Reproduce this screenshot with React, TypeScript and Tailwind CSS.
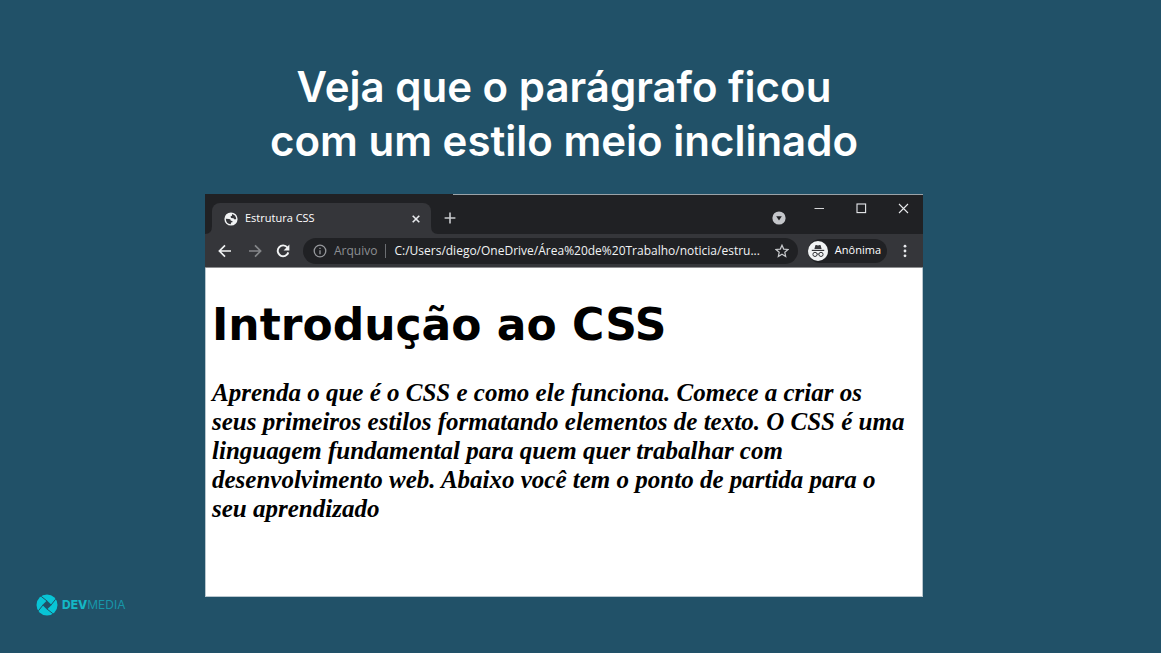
import React from "react";

function GlobeIcon() {
  return (
    <svg viewBox="0 0 14 14" className="size-3.5 shrink-0" aria-hidden="true">
      <circle cx="7" cy="7" r="6.6" fill="#f1f3f4" />
      <path
        d="M1.8 6.8 L5.2 7 Q6.8 7.2 6.8 8.8 L8.4 8.9 V10.2 L7 10.4 L6.8 12.2 Q2 12 1.8 6.8 Z M8 1.9 Q12 3 12.2 6.9 L10.8 7.5 L9.4 6.2 L7 6 L6.6 4.3 L8 3.8 Z"
        fill="#35363a"
      />
    </svg>
  );
}

function IncognitoIcon() {
  return (
    <svg viewBox="0 0 20 20" className="size-5 shrink-0" aria-hidden="true">
      <circle cx="10" cy="10" r="10" fill="#f1f3f4" />
      <path d="M6.4 8 L7.4 4.3 Q7.6 3.8 8.2 4 L10 4.5 L11.8 4 Q12.4 3.8 12.6 4.3 L13.6 8 Z" fill="#35363a" />
      <path d="M3.8 9.4 H16.2" stroke="#35363a" strokeWidth="1.2" />
      <g fill="none" stroke="#35363a" strokeWidth="1">
        <circle cx="7" cy="13.4" r="2.1" />
        <circle cx="13" cy="13.4" r="2.1" />
        <path d="M9.1 13.2 Q10 12.6 10.9 13.2" />
      </g>
    </svg>
  );
}

function TabStrip() {
  return (
    <div className="flex h-[39px] items-end bg-[#202124]">
      <svg viewBox="0 0 7 8" className="h-2 w-[7px] shrink-0" aria-hidden="true">
        <path d="M7 0 V8 H0 Q7 8 7 0 Z" fill="#35363a" />
      </svg>
      <div className="flex h-[31px] w-[219px] shrink-0 items-center rounded-t-lg bg-[#35363a] pr-2.5 pl-3 text-white">
        <GlobeIcon />
        <span className="ml-[7px] flex-1 text-[11px]">Estrutura CSS</span>
        <button type="button" aria-label="Fechar guia">
          <svg viewBox="0 0 10 10" className="size-2.5" aria-hidden="true">
            <path d="M1.7 1.7 L8.3 8.3 M8.3 1.7 L1.7 8.3" stroke="#e8eaed" strokeWidth="1.6" />
          </svg>
        </button>
      </div>
      <svg viewBox="0 0 7 8" className="h-2 w-[7px] shrink-0" aria-hidden="true">
        <path d="M0 0 V8 H7 Q0 8 0 0 Z" fill="#35363a" />
      </svg>
      <div className="flex h-full flex-1 items-start pl-1.5">
        <div className="flex flex-1 items-start">
          <button type="button" aria-label="Nova guia" className="mt-[17px]">
            <svg viewBox="0 0 12 12" className="size-3" aria-hidden="true">
              <path d="M6 0.6 V11.4 M0.6 6 H11.4" stroke="#c8cacd" strokeWidth="1.6" />
            </svg>
          </button>
        </div>
        <button type="button" aria-label="Pesquisar guias" className="mt-4 mr-7">
          <svg viewBox="0 0 14 14" className="size-3.5" aria-hidden="true">
            <circle cx="7" cy="7" r="6.6" fill="#c4c6ca" />
            <path d="M4.2 5.2 H9.8 L7 9.4 Z" fill="#202124" />
          </svg>
        </button>
        <div className="mt-2 mr-3.5 flex gap-[31px]">
          <button type="button" aria-label="Minimizar">
            <svg viewBox="0 0 11 11" className="size-[11px]" aria-hidden="true">
              <path d="M0.5 5.5 H10" stroke="#d5d6d8" />
            </svg>
          </button>
          <button type="button" aria-label="Maximizar">
            <svg viewBox="0 0 11 11" className="size-[11px]" aria-hidden="true">
              <rect x="1" y="1" width="8.6" height="8.6" fill="none" stroke="#e8eaed" strokeWidth="1.1" />
            </svg>
          </button>
          <button type="button" aria-label="Fechar">
            <svg viewBox="0 0 11 11" className="size-[11px]" aria-hidden="true">
              <path d="M1 1 L10 10 M10 1 L1 10" stroke="#e8eaed" strokeWidth="1.1" />
            </svg>
          </button>
        </div>
      </div>
    </div>
  );
}

function Toolbar() {
  return (
    <div className="flex h-[34px] items-center border-b border-[#8d8e90] bg-[#35363a] pr-4 pl-3 text-white">
      <button type="button" aria-label="Voltar">
        <svg viewBox="0 0 16 16" className="size-4" fill="none" stroke="#f1f3f4" strokeWidth="1.7" aria-hidden="true">
          <path d="M14 8 H2.8 M8 2.4 L2.4 8 L8 13.6" />
        </svg>
      </button>
      <button type="button" aria-label="Avançar" className="ml-3.5">
        <svg viewBox="0 0 16 16" className="size-4" fill="none" stroke="#85878a" strokeWidth="1.7" aria-hidden="true">
          <path d="M2 8 H13.2 M8 2.4 L13.6 8 L8 13.6" />
        </svg>
      </button>
      <button type="button" aria-label="Atualizar" className="ml-3">
        <svg viewBox="0 0 16 16" className="size-4" aria-hidden="true">
          <path d="M12.4 4.5 A5.4 5.4 0 1 0 13.3 9.4" fill="none" stroke="#f1f3f4" strokeWidth="1.9" />
          <path d="M14.4 1.6 V7.4 H8.6 Z" fill="#f1f3f4" />
        </svg>
      </button>
      <div className="ml-3 flex h-[26px] min-w-0 flex-1 items-center rounded-full bg-[#202124] pr-[9px] pl-2.5">
        <svg viewBox="0 0 14 14" className="size-3.5 shrink-0" fill="none" stroke="#96989c" strokeWidth="1.3" aria-hidden="true">
          <circle cx="7" cy="7" r="5.8" />
          <path d="M7 6.3 V10.2 M7 3.7 V5" />
        </svg>
        <span className="ml-[7px] text-[12px] text-[#8d8f93]">Arquivo</span>
        <span className="mx-2 h-3.5 w-px shrink-0 bg-[#6c6e72]" />
        <input
          aria-label="Endereço"
          readOnly
          className="min-w-0 flex-1 bg-transparent text-[12px] text-ellipsis text-[#f1f3f4] outline-none"
          value="C:/Users/diego/OneDrive/Área%20de%20Trabalho/noticia/estru..."
        />
        <button type="button" aria-label="Favoritar" className="ml-2 shrink-0">
          <svg viewBox="0 0 14 14" className="size-3.5" aria-hidden="true">
            <path
              d="M7 1.2 L8.7 5.1 L13 5.5 L9.8 8.3 L10.7 12.5 L7 10.3 L3.3 12.5 L4.2 8.3 L1 5.5 L5.3 5.1 Z"
              fill="none"
              stroke="#c8cacd"
              strokeWidth="1.2"
            />
          </svg>
        </button>
      </div>
      <button type="button" className="ml-2.5 flex h-6 shrink-0 items-center rounded-full bg-[#202124] pr-1.5 text-[11px] font-medium">
        <IncognitoIcon />
        <span className="ml-[7px]">Anônima</span>
      </button>
      <button type="button" aria-label="Menu" className="ml-4 shrink-0">
        <svg viewBox="0 0 4 14" className="h-3.5 w-1" fill="#e8eaed" aria-hidden="true">
          <circle cx="2" cy="2.2" r="1.4" />
          <circle cx="2" cy="7" r="1.4" />
          <circle cx="2" cy="11.8" r="1.4" />
        </svg>
      </button>
    </div>
  );
}

function BrowserWindow() {
  return (
    <section className="w-full max-w-[718px] bg-[#202124] font-['Open_Sans','Noto_Sans',sans-serif]">
      <div className="flex h-px">
        <span className="w-[248px]" />
        <span className="flex-1 bg-[#9aa3a8]" />
      </div>
      <TabStrip />
      <Toolbar />
      <article className="min-h-[329px] border-x border-b border-[#b9c7cf] bg-white pt-7 pr-3 pl-1.5 text-black">
        <h1 className="font-['DejaVu_Sans',Verdana,sans-serif] text-[44px] leading-[58px] font-bold">Introdução ao CSS</h1>
        <p className="mt-6 font-['Liberation_Serif','Times_New_Roman',serif] text-[25px] leading-[29px] font-bold italic">
          Aprenda o que é o CSS e como ele funciona. Comece a criar os seus primeiros estilos formatando elementos de
          texto. O CSS é uma linguagem fundamental para quem quer trabalhar com desenvolvimento web. Abaixo você tem o
          ponto de partida para o seu aprendizado
        </p>
      </article>
    </section>
  );
}

function Logo() {
  return (
    <div className="flex items-center gap-1 text-[#14b8c6]">
      <svg viewBox="0 0 22 22" className="size-[22px]" aria-hidden="true">
        <circle cx="11" cy="11" r="10.5" fill="#08c5d6" />
        <path d="M11 6.4 L15.6 11 L11 15.6 L6.4 11 Z" fill="#215168" />
        <path d="M5.2 2.4 L11 7 M19.6 5.2 L15 11 M16.8 19.6 L11 15 M2.4 16.8 L7 11" stroke="#215168" strokeWidth="1" />
      </svg>
      <span className="font-['Inter',sans-serif] text-[12px] leading-4">
        <b className="font-extrabold">DEV</b>
        <span className="font-normal text-[#1796a8]">MEDIA</span>
      </span>
    </div>
  );
}

export default function App() {
  return (
    <div className="flex min-h-screen flex-col bg-[#215168]">
      <main className="flex flex-1 flex-col items-center pt-[60px] pr-[33px]">
        <h2 className="text-center font-['Inter',sans-serif] text-[42px] leading-[54px] font-semibold text-white">
          Veja que o parágrafo ficou
          <br />
          com um estilo meio inclinado
        </h2>
        <div className="mt-[26px] flex w-full justify-center">
          <BrowserWindow />
        </div>
      </main>
      <footer className="-mt-1 pb-[37px] pl-9">
        <Logo />
      </footer>
    </div>
  );
}
